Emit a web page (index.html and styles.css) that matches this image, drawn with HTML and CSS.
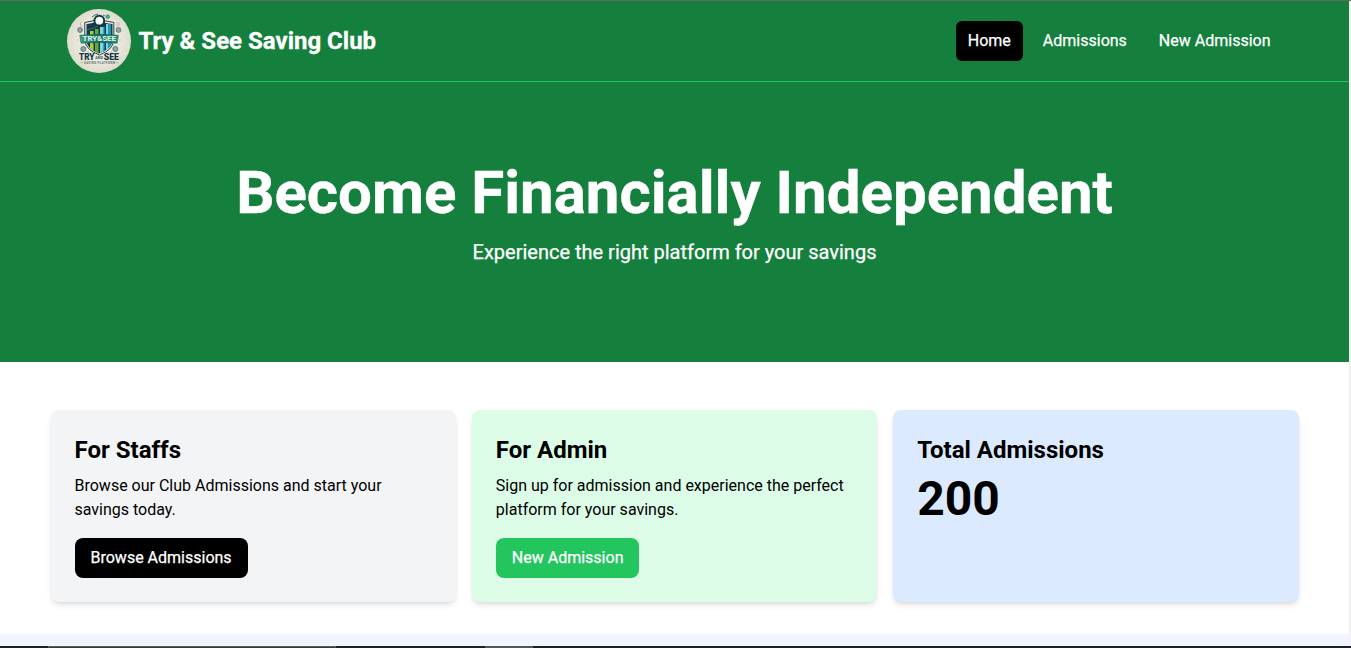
FILE: index.html
```html
<!DOCTYPE html>
<html lang="en">
<head>
<meta charset="utf-8">
<title>Try &amp; See Saving Club</title>
<link rel="stylesheet" href="styles.css">
</head>
<body>
<div class="window">
  <div class="page">
    <nav class="navbar">
      <div class="navbar-inner">
        <a class="brand">
          <svg class="logo" viewBox="0 0 64 64" role="img" aria-label="Try and See logo">
            <defs>
              <radialGradient id="disc"><stop offset="0" stop-color="#f2f0e6"/><stop offset=".7" stop-color="#e9e6da"/><stop offset="1" stop-color="#dddccf"/></radialGradient>
              <linearGradient id="ribbon" x1="0" x2="1"><stop offset="0" stop-color="#34a581"/><stop offset=".5" stop-color="#126b62"/><stop offset="1" stop-color="#229a7b"/></linearGradient>
              <clipPath id="shield"><path d="M19.500 15q7.500-.5 12.500-4 5 3.500 13.500 4v17q-1 8-13.500 12.500-12-4.500-12.500-12.500z"/></clipPath>
            </defs>
            <circle cx="32" cy="32" r="32" fill="url(#disc)"/>
            <g fill="#8fa5a0" stroke="#55757a" stroke-width=".9">
              <circle cx="13" cy="21" r="2.400"/><circle cx="51.500" cy="21" r="2.400"/>
              <circle cx="16.300" cy="40" r="2.500"/><circle cx="48.300" cy="40" r="2.500"/>
            </g>
            <g fill="none" stroke="#b5bd94" stroke-width=".8">
              <path d="M13.500 13v4h2M50 13v5M52 13v4M21 42v2M44 42v2M11 30v2M53 30v2"/>
            </g>
            <path d="M17.800 13.500q8-.5 14.200-5 6 4.500 14.800 5v18q-1 9.500-14.400 14.500-13.600-5-14.600-14.500z" fill="#f4f3e9" stroke="#29434f" stroke-width="1"/>
            <g clip-path="url(#shield)">
              <path fill="#173a48" d="M17 9h31v37H17z"/>
              <path fill="#a8d035" d="M23 22h3.500v22H23z"/>
              <path fill="#62ab38" d="M28 20h3.500v25H28z"/>
              <path fill="#7dd5d5" d="M33 18h3v27h-3z"/>
              <path fill="#2da6c9" d="M36 18h1.500v27H36z"/>
              <path fill="#6fdbeb" d="M39 15h2.500v30H39z"/>
              <path fill="#2798b8" d="M41.500 15h2.500v30h-2.500z"/>
              <path d="M20 21l7-2 5-3" fill="none" stroke="#537f82" stroke-width=".7"/>
            </g>
            <circle cx="32.300" cy="11.700" r="4.900" fill="#e8f0ea" stroke="#153743" stroke-width="2"/>
            <path d="M29 11l2-2h3l2 2-1 3h-4z" fill="#fff"/>
            <path d="M25 8l3-2 3-1M36 6l2 1" fill="none" stroke="#2b6865" stroke-width=".9"/>
            <circle cx="40.700" cy="7.700" r="1.900" fill="#35bb65" stroke="#2c765d" stroke-width=".5"/>
            <path d="M12.800 26.200q19.300-1.800 38.600 0l-1.200 8q-18-1.500-36.200 0z" fill="url(#ribbon)" stroke="#15534f" stroke-width=".5"/>
            <text class="logo-ribbon" x="15.500" y="32.400" textLength="33.500" lengthAdjust="spacingAndGlyphs">TRY&amp;SEE</text>
            <text class="logo-name" x="12" y="51.200" textLength="15.500" lengthAdjust="spacingAndGlyphs">TRY</text>
            <text class="logo-and" x="28.300" y="50" textLength="7.500" lengthAdjust="spacingAndGlyphs">AND</text>
            <text class="logo-name" x="36.800" y="51.200" textLength="15.200" lengthAdjust="spacingAndGlyphs">SEE</text>
            <text class="logo-tag" x="17" y="54.700" textLength="31" lengthAdjust="spacing">SAVING PLATFORM</text>
            <path d="M13.500 53.600h2.500M49 53.600h2.500" stroke="#89b463" stroke-width=".7"/>
          </svg>
          <span class="brand-name">Try &amp; See Saving Club</span>
        </a>
        <div class="nav-links">
          <a class="nav-link nav-link-active">Home</a>
          <a class="nav-link">Admissions</a>
          <a class="nav-link">New Admission</a>
        </div>
      </div>
    </nav>
    <header class="hero">
      <h1 class="hero-title">Become Financially Independent</h1>
      <p class="hero-text">Experience the right platform for your savings</p>
    </header>
    <main class="cards">
      <section class="card card-gray">
        <h2 class="card-title">For Staffs</h2>
        <p class="card-text">Browse our Club Admissions and start your savings today.</p>
        <a class="button button-black">Browse Admissions</a>
      </section>
      <section class="card card-green">
        <h2 class="card-title">For Admin</h2>
        <p class="card-text">Sign up for admission and experience the perfect platform for your savings.</p>
        <a class="button button-green">New Admission</a>
      </section>
      <section class="card card-blue">
        <h2 class="card-title">Total Admissions</h2>
        <p class="card-count">200</p>
      </section>
    </main>
    <div class="next-section"></div>
  </div>
  <div class="taskbar"><span class="task-search"></span><span class="task-item"></span></div>
</div>
</body>
</html>
```
FILE: styles.css
```css
* { box-sizing: border-box; margin: 0; padding: 0; }
body {
  font-family: Roboto, "Liberation Sans", sans-serif;
  font-size: 16px;
  line-height: 24px;
  color: #000;
  overflow: hidden;
}
.window {
  display: flex;
  flex-direction: column;
  height: 648px;
  background: #f1f1f1;
  border-top: 1px solid #666;
}
.page {
  flex: 1;
  display: flex;
  flex-direction: column;
  width: 1349px;
  background: #fff;
}
.navbar { background: #15803d; border-bottom: 1px solid #22c55e; }
.navbar-inner {
  display: flex;
  align-items: center;
  justify-content: space-between;
  width: 1280px;
  height: 80px;
  margin: 0 auto;
  padding: 0 32px;
}
.brand { display: flex; align-items: center; gap: 8px; }
.logo { display: block; width: 64px; height: 64px; }
.logo-ribbon { font-size: 7px; font-weight: 700; fill: #e6f6e8; }
.logo-name { font-size: 9px; font-weight: 900; fill: #173442; }
.logo-and { font-size: 3.8px; font-weight: 700; fill: #315354; }
.logo-tag { font-size: 2.8px; font-weight: 700; fill: #55706d; }
.brand-name {
  font-size: 24px;
  line-height: 32px;
  font-weight: 700;
  color: #fff;
  -webkit-text-stroke: .3px #fff;
}
.nav-links { display: flex; gap: 8px; }
.nav-link {
  padding: 8px 12px;
  border-radius: 6px;
  color: #fff;
  -webkit-text-stroke: .25px #fff;
}
.nav-link-active { background: #000; }
.hero {
  display: flex;
  flex-direction: column;
  align-items: center;
  gap: 15px;
  padding: 81px 16px 96px;
  background: #15803d;
  color: #fff;
}
.hero-title { font-size: 60px; line-height: 60px; font-weight: 700; -webkit-text-stroke: .4px #fff; }
.hero-text { font-size: 20px; line-height: 28px; -webkit-text-stroke: .25px #fff; }
.cards {
  display: grid;
  grid-template-columns: repeat(3, 1fr);
  gap: 16px;
  width: 1280px;
  margin: 0 auto;
  padding: 48px 16px 32px;
}
.card {
  padding: 24px;
  border-radius: 8px;
  box-shadow: 0 4px 6px -1px rgba(0, 0, 0, .1), 0 2px 4px -2px rgba(0, 0, 0, .1);
}
.card-gray { background: #f3f4f6; }
.card-green { background: #dcfce7; }
.card-blue { background: #dbeafe; }
.card-title { font-size: 24px; line-height: 32px; font-weight: 700; }
.card-text { margin: 8px 0 16px; }
.card-count { margin-top: 9px; font-size: 48px; line-height: 48px; font-weight: 700; }
.button {
  display: inline-block;
  padding: 8px 16px;
  border-radius: 8px;
  color: #fff;
  -webkit-text-stroke: .25px #fff;
}
.button-black { background: #000; }
.button-green { background: #22c55e; }
.next-section { flex: 1; background: #eff6ff; }
.taskbar { display: flex; height: 2px; padding-left: 48px; background: #202124; }
.task-search { width: 288px; margin-right: 149px; border: 1px solid #5c5c5c; border-bottom: 0; background: #383838; }
.task-item { width: 48px; background: #565656; }
```
